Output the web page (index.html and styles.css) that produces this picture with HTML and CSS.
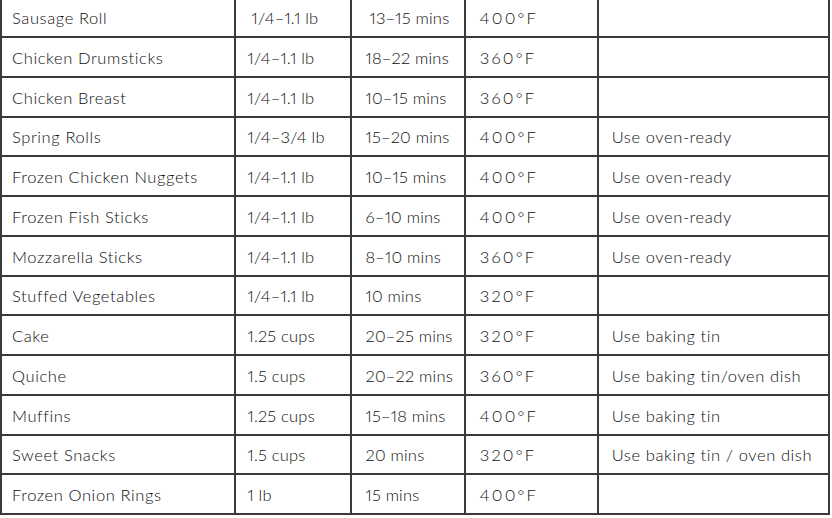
FILE: index.html
```html
<!DOCTYPE html>
<html>
<head>
<meta charset="utf-8">
<link rel="stylesheet" href="styles.css">
</head>
<body>
<div class="table">
  <div class="c c1">Sausage Roll</div><div class="c c2 lead">1/4–1.1 lb</div><div class="c c3 lead">13–15 mins</div><div class="c c4">400°F</div><div class="c c5"></div>
  <div class="c c1">Chicken Drumsticks</div><div class="c c2">1/4–1.1 lb</div><div class="c c3">18–22 mins</div><div class="c c4">360°F</div><div class="c c5"></div>
  <div class="c c1">Chicken Breast</div><div class="c c2">1/4–1.1 lb</div><div class="c c3">10–15 mins</div><div class="c c4">360°F</div><div class="c c5"></div>
  <div class="c c1">Spring Rolls</div><div class="c c2">1/4–3/4 lb</div><div class="c c3">15–20 mins</div><div class="c c4">400°F</div><div class="c c5">Use oven-ready</div>
  <div class="c c1">Frozen Chicken Nuggets</div><div class="c c2">1/4–1.1 lb</div><div class="c c3">10–15 mins</div><div class="c c4">400°F</div><div class="c c5">Use oven-ready</div>
  <div class="c c1">Frozen Fish Sticks</div><div class="c c2">1/4–1.1 lb</div><div class="c c3">6–10 mins</div><div class="c c4">400°F</div><div class="c c5">Use oven-ready</div>
  <div class="c c1">Mozzarella Sticks</div><div class="c c2">1/4–1.1 lb</div><div class="c c3">8–10 mins</div><div class="c c4">360°F</div><div class="c c5">Use oven-ready</div>
  <div class="c c1">Stuffed Vegetables</div><div class="c c2">1/4–1.1 lb</div><div class="c c3">10 mins</div><div class="c c4">320°F</div><div class="c c5"></div>
  <div class="c c1">Cake</div><div class="c c2">1.25 cups</div><div class="c c3">20–25 mins</div><div class="c c4">320°F</div><div class="c c5">Use baking tin</div>
  <div class="c c1">Quiche</div><div class="c c2">1.5 cups</div><div class="c c3">20–22 mins</div><div class="c c4">360°F</div><div class="c c5">Use baking tin/oven dish</div>
  <div class="c c1">Muffins</div><div class="c c2">1.25 cups</div><div class="c c3">15–18 mins</div><div class="c c4">400°F</div><div class="c c5">Use baking tin</div>
  <div class="c c1">Sweet Snacks</div><div class="c c2">1.5 cups</div><div class="c c3">20 mins</div><div class="c c4">320°F</div><div class="c c5">Use baking tin / oven dish</div>
  <div class="c c1">Frozen Onion Rings</div><div class="c c2">1 lb</div><div class="c c3">15 mins</div><div class="c c4">400°F</div><div class="c c5"></div>
</div>
</body>
</html>
```
FILE: styles.css
```css
html, body {
  margin: 0;
  padding: 0;
  background: #ffffff;
}
.table {
  display: grid;
  grid-template-columns: 231.5px 114px 112.2px 131px 229.3px;
  grid-auto-rows: 37.75px;
  gap: 2px;
  padding: 2px;
  width: 826px;
  margin-top: -3.75px;
  background: #3a3a3a;
  font-family: "Lato", "Liberation Sans", sans-serif;
  font-size: 16.5px;
  font-weight: 300;
  color: #0e0e0e;
  font-variant-ligatures: none;
  font-variant-numeric: proportional-nums;
}
.c {
  background: #ffffff;
  display: flex;
  align-items: center;
  white-space: nowrap;
  padding-top: 2px;
}
.c1, .c5 { letter-spacing: 0.6px; }
.c2, .c3 { letter-spacing: 0.2px; }
.c4 { letter-spacing: 2.2px; }
.c1 { padding-left: 10px; }
.c2 { padding-left: 12px; }
.c3 { padding-left: 14px; }
.c4 { padding-left: 14px; }
.c5 { padding-left: 13px; }
.c2.lead { padding-left: 16px; }
.c3.lead { padding-left: 18px; }
```
